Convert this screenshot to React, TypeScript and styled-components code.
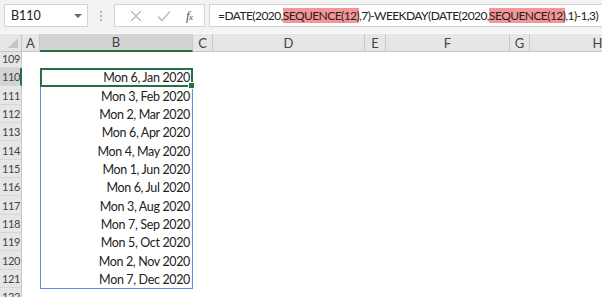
import React from 'react';
import styled, { createGlobalStyle } from 'styled-components';

const GlobalStyle = createGlobalStyle`
    html, body {
        margin: 0;
        padding: 0;
        background: #ffffff;
        overflow: hidden;
    }
    body {
        font-family: Lato, 'Liberation Sans', sans-serif;
    }
`;

const ROW_H = 18.33;
const COLS = [
    { key: '', width: 22 },
    { key: 'A', width: 18 },
    { key: 'B', width: 153 },
    { key: 'C', width: 20 },
    { key: 'D', width: 152 },
    { key: 'E', width: 21 },
    { key: 'F', width: 124 },
    { key: 'G', width: 20 },
    { key: 'H', width: 136 },
];

const dates = [
    'Mon 6, Jan 2020',
    'Mon 3, Feb 2020',
    'Mon 2, Mar 2020',
    'Mon 6, Apr 2020',
    'Mon 4, May 2020',
    'Mon 1, Jun 2020',
    'Mon 6, Jul 2020',
    'Mon 3, Aug 2020',
    'Mon 7, Sep 2020',
    'Mon 5, Oct 2020',
    'Mon 2, Nov 2020',
    'Mon 7, Dec 2020',
];

const Page = styled.div`
    width: 602px;
    height: 297px;
    overflow: hidden;
    background: #ffffff;
`;

const Toolbar = styled.div`
    display: flex;
    align-items: center;
    height: 34px;
    padding: 0 0 2px 4px;
    background: #f3f3f3;
    border-bottom: 1px solid #fbfbfb;
    box-sizing: border-box;
`;

const NameBox = styled.div`
    flex: none;
    display: flex;
    align-items: center;
    justify-content: space-between;
    width: 84px;
    height: 23px;
    box-sizing: border-box;
    padding: 0 5px 0 6px;
    background: #ffffff;
    border: 1px solid #d4d4d4;
    font-size: 12.5px;
    color: #222;
`;

const Caret = styled.span`
    width: 0;
    height: 0;
    border-left: 4px solid transparent;
    border-right: 4px solid transparent;
    border-top: 4px solid #6a6a6a;
`;

const Grip = styled.div`
    flex: none;
    display: flex;
    flex-direction: column;
    gap: 2px;
    margin: 0 12px 0 12px;
    span {
        width: 2px;
        height: 2px;
        background: #b4b4b4;
    }
`;

const ActionBox = styled.div`
    flex: none;
    display: flex;
    align-items: center;
    justify-content: space-around;
    width: 91px;
    height: 23px;
    box-sizing: border-box;
    padding: 0 4px 0 8px;
    background: #ffffff;
    border: 1px solid #d4d4d4;
    margin-right: 4px;
`;

const Fx = styled.span`
    font-family: 'Liberation Serif', serif;
    font-style: italic;
    font-size: 13px;
    color: #555;
    letter-spacing: -0.5px;
    sub {
        font-size: 9px;
        vertical-align: baseline;
    }
`;

const FormulaBar = styled.div`
    flex: 1;
    min-width: 0;
    display: flex;
    align-items: center;
    height: 23px;
    box-sizing: border-box;
    padding-left: 8px;
    background: #ffffff;
    border: 1px solid #d4d4d4;
    border-right: none;
    font-size: 12px;
    letter-spacing: -0.56px;
    color: #222;
    white-space: pre;
    overflow: hidden;
`;

const Mark = styled.span`
    background: #f59595;
`;

const Sheet = styled.div`
    position: relative;
    display: grid;
    grid-template-columns: ${COLS.map((c) => `${c.width}px`).join(' ')};
    grid-template-rows: 18px 16px repeat(13, ${ROW_H}px);
`;

const ColHead = styled.div<{ $active?: boolean }>`
    display: flex;
    align-items: center;
    justify-content: center;
    box-sizing: border-box;
    background: ${(p) => (p.$active ? '#d3d3d3' : '#e6e6e6')};
    border-right: 1px solid #c8c8c8;
    border-bottom: ${(p) => (p.$active ? '2px solid #217346' : '1px solid #c8c8c8')};
    font-size: 13px;
    color: #444;
`;

const Corner = styled.div`
    position: relative;
    box-sizing: border-box;
    background: #e6e6e6;
    border-right: 1px solid #c8c8c8;
    border-bottom: 1px solid #c8c8c8;
    &::after {
        content: '';
        position: absolute;
        right: 3px;
        bottom: 3px;
        border-left: 10px solid transparent;
        border-bottom: 10px solid #c4c4c4;
    }
`;

const RowHead = styled.div<{ $active?: boolean }>`
    display: flex;
    align-items: flex-end;
    padding: 0 0 2px 2px;
    box-sizing: border-box;
    background: ${(p) => (p.$active ? '#d3d3d3' : '#e6e6e6')};
    border-right: ${(p) => (p.$active ? '2px solid #217346' : '1px solid #c8c8c8')};
    border-bottom: 1px solid #d6d6d6;
    font-size: 11px;
    letter-spacing: -0.4px;
    color: #444;
    white-space: nowrap;
`;

const Cell = styled.div<{ $align?: 'left' | 'right' }>`
    display: flex;
    align-items: flex-end;
    justify-content: ${(p) => (p.$align === 'right' ? 'flex-end' : 'flex-start')};
    padding: 0 3px 1px 3px;
    box-sizing: border-box;
    font-size: 12.5px;
    letter-spacing: -0.35px;
    color: #222;
    white-space: nowrap;
    overflow: hidden;
`;

const Spill = styled.div`
    position: absolute;
    left: 40px;
    top: 34px;
    width: 153px;
    height: ${ROW_H * 12 + 1}px;
    box-sizing: border-box;
    border: 1px solid #5b8edb;
    pointer-events: none;
`;

const Active = styled.div`
    position: absolute;
    left: 40px;
    top: 34px;
    width: 153px;
    height: ${ROW_H + 1}px;
    box-sizing: border-box;
    border: 2px solid #217346;
    pointer-events: none;
    &::after {
        content: '';
        position: absolute;
        right: -4px;
        bottom: -4px;
        width: 5px;
        height: 5px;
        background: #217346;
        border: 1px solid #ffffff;
    }
`;

const Cross = () => (
    <svg width="12" height="12" viewBox="0 0 12 12">
        <path d="M1 1 L11 11 M11 1 L1 11" stroke="#b8b8b8" strokeWidth="1.3" fill="none" />
    </svg>
);

const Check = () => (
    <svg width="14" height="12" viewBox="0 0 14 12">
        <path d="M1 6.5 L5 10.5 L13 1.5" stroke="#b8b8b8" strokeWidth="1.4" fill="none" />
    </svg>
);

const App = () => {
    const rows = [109, ...dates.map((_, i) => 110 + i), 122];

    return (
        <Page>
            <GlobalStyle />
            <Toolbar>
                <NameBox>
                    B110
                    <Caret />
                </NameBox>
                <Grip>
                    <span />
                    <span />
                    <span />
                </Grip>
                <ActionBox>
                    <Cross />
                    <Check />
                    <Fx>
                        f<sub>x</sub>
                    </Fx>
                </ActionBox>
                <FormulaBar>
                    {'=DATE(2020,'}
                    <Mark>SEQUENCE(12)</Mark>
                    {',7)-WEEKDAY(DATE(2020,'}
                    <Mark>SEQUENCE(12)</Mark>
                    {',1)-1,3)'}
                </FormulaBar>
            </Toolbar>
            <Sheet>
                <Corner />
                {COLS.slice(1).map((c) => (
                    <ColHead key={c.key} $active={c.key === 'B'}>
                        {c.key}
                    </ColHead>
                ))}
                {rows.map((r) => (
                    <React.Fragment key={r}>
                        <RowHead $active={r === 110}>{r}</RowHead>
                        {COLS.slice(1).map((c) => (
                            <Cell key={c.key} $align={c.key === 'B' ? 'right' : 'left'}>
                                {c.key === 'B' && r >= 110 && r <= 121 ? dates[r - 110] : ''}
                            </Cell>
                        ))}
                    </React.Fragment>
                ))}
                <Spill />
                <Active />
            </Sheet>
        </Page>
    );
};

export default App;
